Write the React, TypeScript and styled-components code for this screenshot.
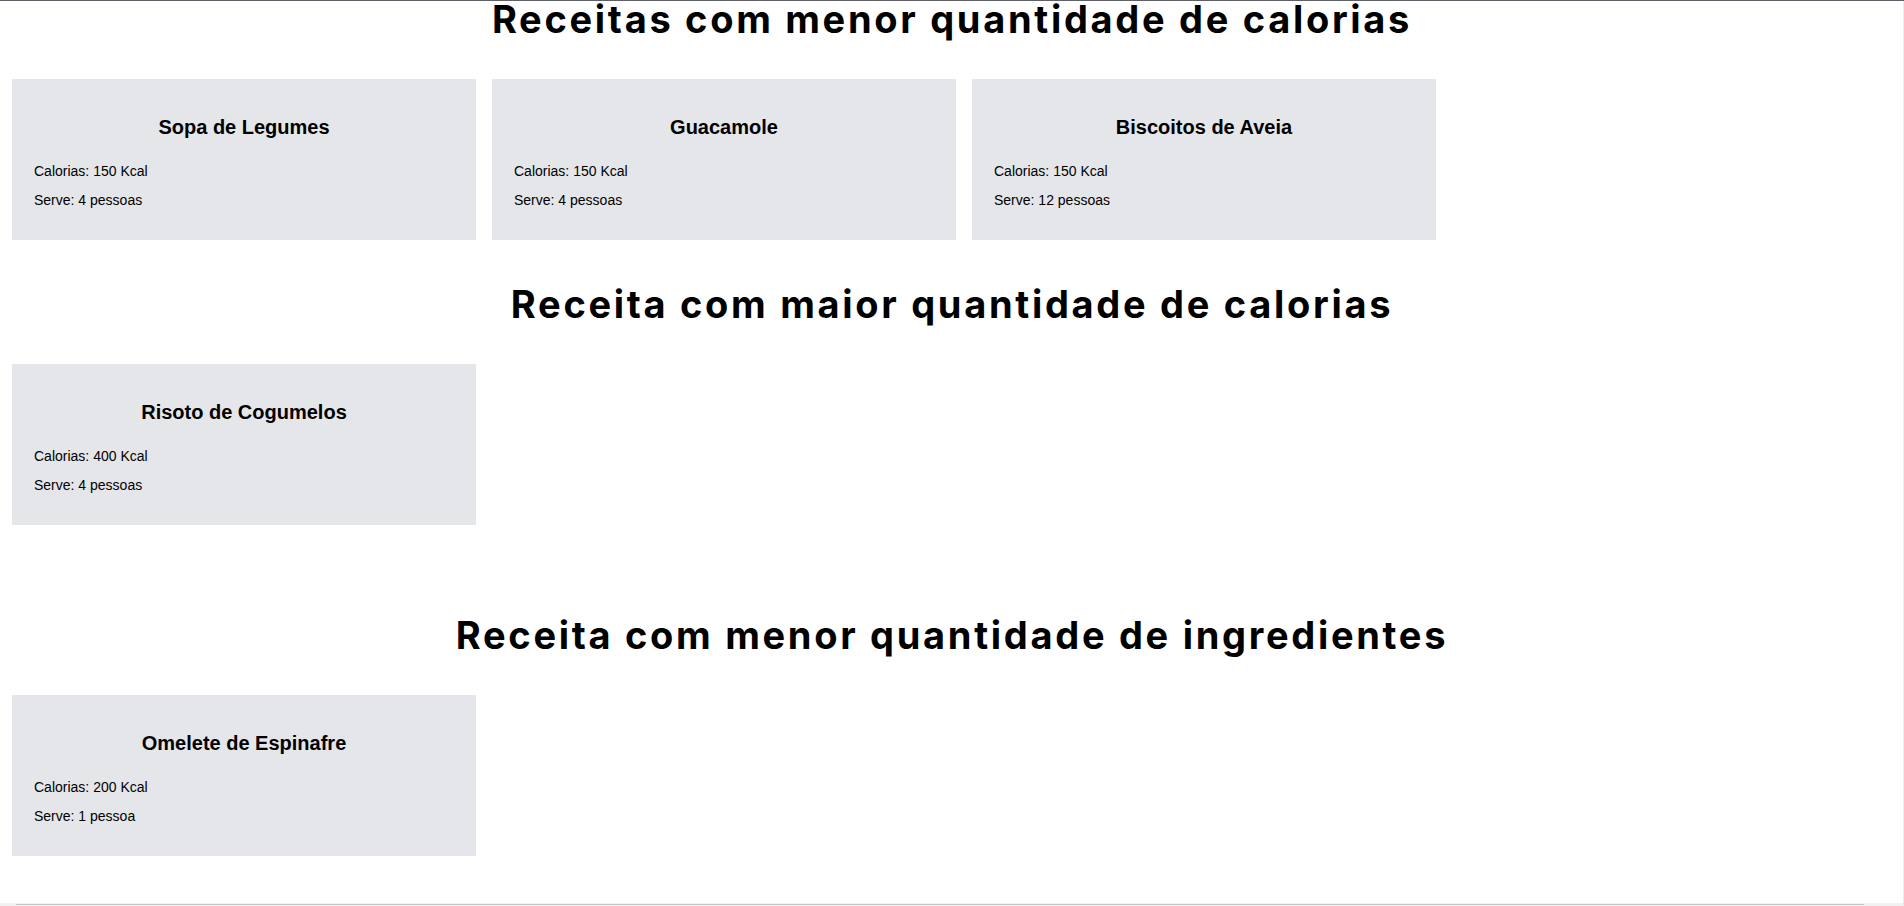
import React from "react";
import styled, { createGlobalStyle } from "styled-components";

const GlobalStyle = createGlobalStyle`
  html, body {
    margin: 0;
    padding: 0;
    background: #ffffff;
  }
  body {
    font-family: "Liberation Sans", Arial, sans-serif;
    color: #000;
  }
`;

const Page = styled.main`
  min-height: 905px;
  border-top: 1px solid #606068;
  box-sizing: border-box;
  display: flex;
  flex-direction: column;
  padding: 0 12px;
`;

const Section = styled.section<{ $gapTop: number }>`
  display: flex;
  flex-direction: column;
  gap: 41px;
  margin-top: ${(p) => p.$gapTop}px;
`;

const Heading = styled.h1`
  margin: 0;
  font-family: Inter, "Open Sans", sans-serif;
  font-weight: 700;
  font-size: 38px;
  line-height: 37px;
  letter-spacing: 2.7px;
  text-align: center;
  color: #000;
`;

const Row = styled.div`
  display: grid;
  grid-template-columns: repeat(3, 464px);
  gap: 16px;
`;

const Card = styled.article`
  background: #e5e6ea;
  height: 161px;
  box-sizing: border-box;
  padding: 37px 22px 0;
  display: flex;
  flex-direction: column;
`;

const CardTitle = styled.h3`
  margin: 0 0 24px;
  font-size: 20px;
  line-height: 23px;
  font-weight: 700;
  text-align: center;
`;

const Info = styled.p`
  margin: 0 0 13px;
  font-size: 14px;
  line-height: 16px;
`;

const HScroll = styled.div`
  position: fixed;
  left: 0;
  right: 0;
  bottom: 0;
  height: 3px;
  background: #f1f1f1;
  &::after {
    content: "";
    position: absolute;
    left: 16px;
    right: 40px;
    top: 1px;
    height: 1px;
    background: #c6c6c6;
  }
`;

const VEdge = styled.div`
  position: fixed;
  top: 1px;
  right: 0;
  bottom: 0;
  width: 1px;
  background: #ececec;
`;

type Recipe = { name: string; kcal: number; serves: string };

const sections: { title: string; gap: number; items: Recipe[] }[] = [
  {
    title: "Receitas com menor quantidade de calorias",
    gap: 0,
    items: [
      { name: "Sopa de Legumes", kcal: 150, serves: "4 pessoas" },
      { name: "Guacamole", kcal: 150, serves: "4 pessoas" },
      { name: "Biscoitos de Aveia", kcal: 150, serves: "12 pessoas" },
    ],
  },
  {
    title: "Receita com maior quantidade de calorias",
    gap: 46,
    items: [{ name: "Risoto de Cogumelos", kcal: 400, serves: "4 pessoas" }],
  },
  {
    title: "Receita com menor quantidade de ingredientes",
    gap: 92,
    items: [{ name: "Omelete de Espinafre", kcal: 200, serves: "1 pessoa" }],
  },
];

export default function App() {
  return (
    <>
      <GlobalStyle />
      <Page>
        {sections.map((s) => (
          <Section key={s.title} $gapTop={s.gap}>
            <Heading>{s.title}</Heading>
            <Row>
              {s.items.map((r) => (
                <Card key={r.name}>
                  <CardTitle>{r.name}</CardTitle>
                  <Info>Calorias: {r.kcal} Kcal</Info>
                  <Info>Serve: {r.serves}</Info>
                </Card>
              ))}
            </Row>
          </Section>
        ))}
      </Page>
      <HScroll />
      <VEdge />
    </>
  );
}
